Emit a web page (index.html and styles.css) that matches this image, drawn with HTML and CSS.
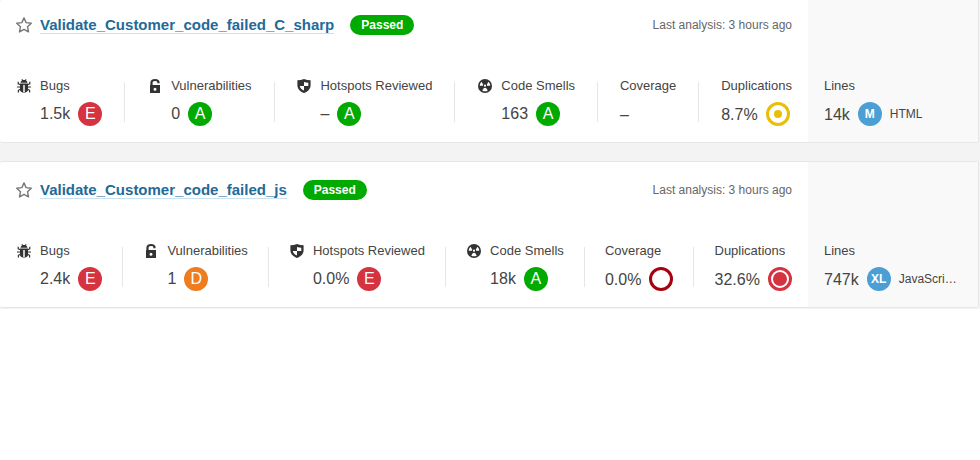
FILE: index.html
```
<!DOCTYPE html>
<html lang="en">
<head>
<meta charset="utf-8">
<title>Projects</title>
<link rel="stylesheet" href="styles.css">
</head>
<body>
<svg class="sprite" aria-hidden="true">
  <symbol id="star" viewBox="0 0 16 16"><path d="M8 .9l2.1 4.7 5.2.6-3.8 3.5 1 5.200L8 12.300l-4.500 2.600 1-5.200L.7 6.200l5.200-.6z" fill="none" stroke="#777" stroke-width="1.4" stroke-linejoin="round"/></symbol>
  <symbol id="bug" viewBox="0 0 16 16"><path d="M4.600 4.800C4.600 3.600 5.300 2.700 6.200 2.300L5.400 1.500l.7-.6 1.100 1h1.600l1.100-1 .7.6-.8.8c.9.400 1.600 1.300 1.600 2.500zM4 5.500h8v6.700c-.5 1.200-1.300 1.800-2.500 2.200h-3C5.300 14 4.500 13.400 4 12.200z" fill="#333"/><path d="M8 7v7" stroke="#fff" stroke-width="1.500"/><path d="M4.500 6.700L2.200 5.800V3.700M11.500 6.700l2.300-.9V3.700M4.500 9H1M11.500 9H15M4.500 11.300l-2.100 1v2.300M11.500 11.300l2.100 1v2.300" fill="none" stroke="#333" stroke-width="1.200"/></symbol>
  <symbol id="lock" viewBox="0 0 16 16"><path d="M4.500 7.500V4.500C4.500 2.700 5.800 2 8 2s3.500.7 3.500 2.500v.7" fill="none" stroke="#333" stroke-width="2.200"/><path d="M3 7h10v8H3zM8 9.700a1.500 1.500 0 1 0 0 3 1.500 1.500 0 0 0 0-3z" fill="#333" fill-rule="evenodd"/></symbol>
  <symbol id="shield" viewBox="0 0 16 16"><path d="M8 1c2 .8 4.300 1.200 6.600 1.300v4.900c0 3.800-2.800 6.200-6.600 7.800-3.800-1.600-6.600-4-6.600-7.800V2.300C3.700 2.200 6 1.800 8 1z" fill="#333"/><path d="M8 3.900c1.400.5 2.800.7 4.300.8v3.400H8zM8 8.100v4.500c-2.300-1-3.900-2.400-4.200-4.500z" fill="#fff"/></symbol>
  <symbol id="smell" viewBox="0 0 16 16"><circle cx="8" cy="8" r="7" fill="#333"/><path d="M6.200 6.700L4.600 3.700A5.300 5.300 0 0 0 2.700 7.700h3.200c0-.4.100-.7.300-1zM9.800 6.700l1.600-3a5.300 5.300 0 0 1 1.900 4h-3.200c0-.4-.1-.7-.3-1zM7.100 9.700l-1.900 2.800a5.300 5.300 0 0 0 5.600 0L8.900 9.700c-.5.400-1.300.4-1.800 0z" fill="#fff"/><circle cx="8" cy="7.700" r="1.100" fill="#fff"/></symbol>
</svg>

<main class="projects">
  <article class="card card-first">
    <div class="overview">
      <header class="heading">
        <svg class="star"><use href="#star"/></svg>
        <a class="name">Validate_Customer_code_failed_C_sharp</a>
        <span class="gate">Passed</span>
        <span class="date">Last analysis: 3 hours ago</span>
      </header>
      <div class="measures">
        <div class="measure"><svg class="icon"><use href="#bug"/></svg><div><div class="label">Bugs</div><div class="value">1.5k<span class="rating e">E</span></div></div></div>
        <i class="divider"></i>
        <div class="measure"><svg class="icon"><use href="#lock"/></svg><div><div class="label">Vulnerabilities</div><div class="value">0<span class="rating a">A</span></div></div></div>
        <i class="divider"></i>
        <div class="measure"><svg class="icon"><use href="#shield"/></svg><div><div class="label">Hotspots Reviewed</div><div class="value">–<span class="rating a">A</span></div></div></div>
        <i class="divider"></i>
        <div class="measure"><svg class="icon"><use href="#smell"/></svg><div><div class="label">Code Smells</div><div class="value">163<span class="rating a">A</span></div></div></div>
        <i class="divider"></i>
        <div class="measure"><div><div class="label">Coverage</div><div class="value"><span class="number">–</span></div></div></div>
        <i class="divider"></i>
        <div class="measure"><div><div class="label">Duplications</div><div class="value"><span class="number">8.7%</span><svg class="ring" viewBox="0 0 24 24"><circle cx="12" cy="12" r="10.5" fill="#fff" stroke="#eabe06" stroke-width="3"/><circle cx="12" cy="12" r="4" fill="#eabe06"/></svg></div></div></div>
      </div>
    </div>
    <aside class="size">
      <div class="label">Lines</div>
      <div class="value"><span class="number">14k</span><span class="rating scale">M</span><span class="language">HTML</span></div>
    </aside>
  </article>

  <article class="card">
    <div class="overview">
      <header class="heading">
        <svg class="star"><use href="#star"/></svg>
        <a class="name">Validate_Customer_code_failed_js</a>
        <span class="gate">Passed</span>
        <span class="date">Last analysis: 3 hours ago</span>
      </header>
      <div class="measures">
        <div class="measure"><svg class="icon"><use href="#bug"/></svg><div><div class="label">Bugs</div><div class="value">2.4k<span class="rating e">E</span></div></div></div>
        <i class="divider"></i>
        <div class="measure"><svg class="icon"><use href="#lock"/></svg><div><div class="label">Vulnerabilities</div><div class="value">1<span class="rating d">D</span></div></div></div>
        <i class="divider"></i>
        <div class="measure"><svg class="icon"><use href="#shield"/></svg><div><div class="label">Hotspots Reviewed</div><div class="value">0.0%<span class="rating e">E</span></div></div></div>
        <i class="divider"></i>
        <div class="measure"><svg class="icon"><use href="#smell"/></svg><div><div class="label">Code Smells</div><div class="value">18k<span class="rating a">A</span></div></div></div>
        <i class="divider"></i>
        <div class="measure"><div><div class="label">Coverage</div><div class="value"><span class="number">0.0%</span><svg class="ring" viewBox="0 0 24 24"><circle cx="12" cy="12" r="10.5" fill="#fff" stroke="#a4030f" stroke-width="3"/></svg></div></div></div>
        <i class="divider"></i>
        <div class="measure"><div><div class="label">Duplications</div><div class="value"><span class="number">32.6%</span><svg class="ring" viewBox="0 0 24 24"><circle cx="12" cy="12" r="10.5" fill="#fff" stroke="#d4333f" stroke-width="3"/><circle cx="12" cy="12" r="7" fill="#d4333f"/></svg></div></div></div>
      </div>
    </div>
    <aside class="size">
      <div class="label">Lines</div>
      <div class="value"><span class="number">747k</span><span class="rating scale">XL</span><span class="language">JavaScri…</span></div>
    </aside>
  </article>
</main>
</body>
</html>
```
FILE: styles.css
```
* { box-sizing: border-box; }
body {
  margin: 0;
  background: #fff;
  color: #444;
  font: 13px/20px "Liberation Sans", Arial, sans-serif;
}
.sprite { display: none; }
.projects {
  display: flex;
  flex-direction: column;
  gap: 18px;
  height: 309px;
  padding-right: 1px;
  background: #f3f3f3;
}
.card {
  display: flex;
  height: 147px;
  border: 1px solid #e6e6e6;
  border-left: 0;
  border-radius: 3px;
  background: #fff;
  overflow: hidden;
}
.card-first {
  height: 143px;
  border-top: 0;
  border-top-right-radius: 0;
}
.overview {
  width: 808px;
  padding: 18px 16px 0;
}
.card-first .overview { padding-top: 15px; }
.heading {
  display: flex;
  align-items: center;
  height: 20px;
}
.star { width: 16px; height: 16px; margin-right: 8px; overflow: visible; }
.name {
  color: #236a97;
  font-size: 15px;
  line-height: 16px;
  font-weight: 700;
  border-bottom: 1px solid #cae3f2;
}
.gate {
  width: 64px;
  margin-left: 16px;
  border-radius: 10px;
  background: #0a0;
  color: #fff;
  font-size: 12px;
  font-weight: 700;
  text-align: center;
}
.date {
  margin-left: auto;
  color: #666;
  font-size: 12px;
}
.measures {
  display: flex;
  justify-content: space-between;
  margin-top: 41px;
}
.measure { display: flex; }
.icon { width: 16px; height: 16px; margin: 2px 8px 0 0; }
.divider {
  width: 1px;
  height: 40px;
  margin-top: 6px;
  background: #e6e6e6;
}
.label { height: 20px; white-space: nowrap; }
.value {
  display: flex;
  align-items: center;
  height: 24px;
  margin-top: 6px;
  gap: 8px;
  font-size: 16px;
  line-height: 24px;
}
.number { line-height: 25px; }
.rating {
  width: 24px;
  height: 24px;
  border-radius: 50%;
  color: #fff;
  text-align: center;
}
.a { background: #0a0; }
.d { background: #ed7d20; }
.e { background: #d4333f; }
.scale {
  background: #4b9fd5;
  font-size: 12px;
  font-weight: 700;
}
.ring { width: 24px; height: 24px; }
.size {
  flex: 1;
  padding: 79px 16px 0;
  background: #f9f9f9;
}
.card-first .size { padding-top: 76px; }
.language { font-size: 12px; }
```
